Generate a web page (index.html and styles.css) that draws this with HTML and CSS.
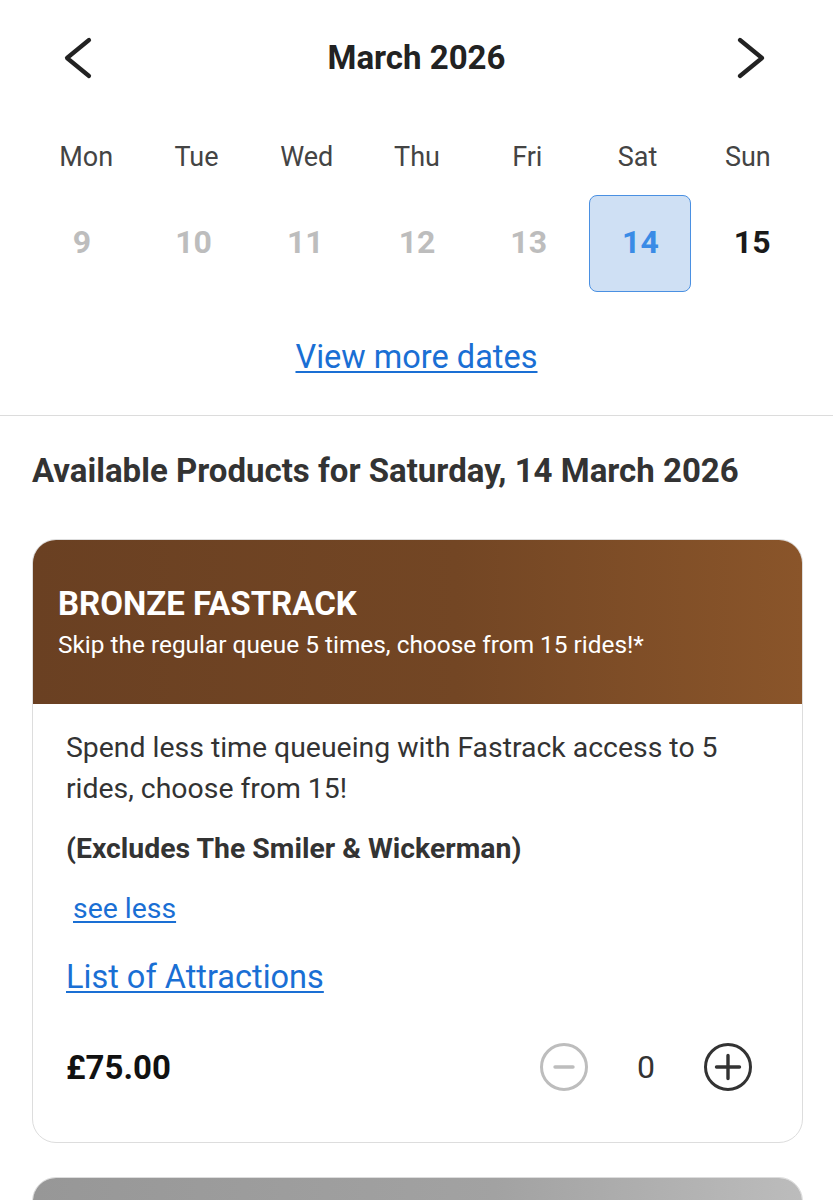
FILE: index.html
```html
<!DOCTYPE html>
<html lang="en">
<head>
<meta charset="utf-8">
<title>Fastrack</title>
<link rel="stylesheet" href="styles.css">
</head>
<body>
<div class="page">
  <header class="month-bar">
    <button class="nav prev" aria-label="Previous month">
      <svg width="32" height="44" viewBox="0 0 32 44"><path d="M25 4 L3 22 L25 40" fill="none" stroke="#222" stroke-width="4.2" stroke-linecap="round" stroke-linejoin="round"/></svg>
    </button>
    <h1 class="month-title">March 2026</h1>
    <button class="nav next" aria-label="Next month">
      <svg width="32" height="44" viewBox="0 0 32 44"><path d="M3 4 L25 22 L3 40" fill="none" stroke="#222" stroke-width="4.2" stroke-linecap="round" stroke-linejoin="round"/></svg>
    </button>
  </header>

  <div class="calendar">
    <div class="weekdays">
      <span>Mon</span><span>Tue</span><span>Wed</span><span>Thu</span><span>Fri</span><span>Sat</span><span>Sun</span>
    </div>
    <div class="days">
      <span class="day disabled">9</span>
      <span class="day disabled">10</span>
      <span class="day disabled">11</span>
      <span class="day disabled">12</span>
      <span class="day disabled">13</span>
      <span class="day selected">14</span>
      <span class="day">15</span>
    </div>
  </div>

  <div class="more-dates"><a href="#">View more dates</a></div>

  <hr class="divider">

  <h2 class="products-title">Available Products for Saturday, 14 March 2026</h2>

  <section class="card">
    <div class="card-head bronze">
      <h3 class="card-title">BRONZE FASTRACK</h3>
      <p class="card-sub">Skip the regular queue 5 times, choose from 15 rides!*</p>
    </div>
    <div class="card-body">
      <p class="desc">Spend less time queueing with Fastrack access to 5 rides, choose from 15!</p>
      <p class="desc strong">(Excludes The Smiler &amp; Wickerman)</p>
      <p class="desc"><a class="see-less" href="#">see less</a></p>
      <p class="attractions"><a href="#">List of Attractions</a></p>
      <div class="price-row">
        <span class="price">£75.00</span>
        <div class="qty">
          <button class="qty-btn minus" aria-label="Decrease">
            <svg width="50" height="50" viewBox="0 0 50 50"><circle cx="25" cy="25" r="22.5" fill="none" stroke="#bdbdbd" stroke-width="3"/><path d="M16 25 H34" stroke="#bdbdbd" stroke-width="3.4" stroke-linecap="round"/></svg>
          </button>
          <span class="qty-val">0</span>
          <button class="qty-btn plus" aria-label="Increase">
            <svg width="50" height="50" viewBox="0 0 50 50"><circle cx="25" cy="25" r="22.5" fill="none" stroke="#333" stroke-width="3"/><path d="M13.5 25 H36.5 M25 13.5 V36.5" stroke="#333" stroke-width="3.4" stroke-linecap="round"/></svg>
          </button>
        </div>
      </div>
    </div>
  </section>

  <section class="card">
    <div class="card-head silver"></div>
  </section>
</div>
</body>
</html>
```

FILE: styles.css
```css
* { box-sizing: border-box; }

html, body {
  margin: 0;
  padding: 0;
  background: #fff;
}

body {
  font-family: Roboto, "Liberation Sans", Arial, sans-serif;
  color: #333;
  height: 1200px;
  overflow: hidden;
}

.page {
  padding-top: 36px;
}

.month-bar {
  display: grid;
  grid-template-columns: 1fr auto 1fr;
  align-items: center;
  padding: 0 64px;
  height: 44px;
}

.nav {
  background: none;
  border: 0;
  padding: 0;
  width: 32px;
  height: 44px;
  display: block;
}
.nav svg { display: block; }
.nav.prev { justify-self: start; }
.nav.next { justify-self: end; }

.month-title {
  margin: 0;
  font-size: 33px;
  font-weight: 700;
  color: #222;
  line-height: 44px;
}

.calendar {
  padding: 0 30px 0 31px;
  margin-top: 60px;
}

.weekdays,
.days {
  display: grid;
  grid-template-columns: repeat(7, 1fr);
  justify-items: center;
  align-items: center;
}

.weekdays span {
  font-size: 27px;
  line-height: 34px;
  color: #444;
}

.days {
  margin: 21px -5px 0;
  height: 97px;
}

.day {
  width: 102px;
  height: 97px;
  display: flex;
  align-items: center;
  justify-content: center;
  padding-bottom: 3px;
  font-size: 32px;
  font-weight: 700;
  color: #1a1a1a;
  border-radius: 8px;
}
.day.disabled { color: #bdbdbd; }
.day.selected {
  background: #cfe0f4;
  border: 1.5px solid #4a90e2;
  color: #3a8be6;
}

.more-dates {
  margin-top: 45px;
  text-align: center;
  line-height: 40px;
  font-size: 32.5px;
}

a {
  color: #1a6fd4;
  text-decoration: underline;
  text-decoration-thickness: 2px;
  text-underline-offset: 3px;
}

.divider {
  margin: 38px 0 0;
  border: 0;
  border-top: 1.5px solid #dcdcdc;
}

.products-title {
  margin: 35px 0 0 32px;
  font-size: 33px;
  line-height: 40px;
  font-weight: 700;
  color: #333;
}

.card {
  margin: 48px 30px 0 32px;
  border: 1px solid #dddddd;
  border-radius: 24px;
  overflow: hidden;
  background: #fff;
}

.card + .card { margin-top: 34px; }

.card-head {
  padding: 46px 25px 43px;
  color: #fff;
  min-height: 164px;
}
.card-head.bronze {
  background: linear-gradient(90deg, #6a4022 0%, #734624 55%, #8a552a 100%);
}
.card-head.silver {
  background: linear-gradient(90deg, #979797 0%, #a2a2a2 60%, #bcbcbc 100%);
}

.card-title {
  margin: 0;
  font-size: 33px;
  line-height: 36px;
  font-weight: 700;
}

.card-sub {
  margin: 8px 0 0;
  font-size: 24.4px;
  line-height: 30px;
}

.card-body {
  padding: 23px 33px 50px 33px;
}

.desc {
  margin: 0 0 19px;
  font-size: 28.4px;
  line-height: 41px;
  color: #333;
}
.desc.strong { font-weight: 700; }

.see-less { margin-left: 7px; }

.attractions {
  margin: 28px 0 0;
  font-size: 32.5px;
  line-height: 41px;
}

.price-row {
  margin-top: 44px;
  display: flex;
  justify-content: space-between;
  align-items: center;
  height: 50px;
  padding-right: 16px;
}

.price {
  font-size: 33px;
  font-weight: 700;
  color: #111;
}

.qty {
  display: flex;
  align-items: center;
  gap: 48px;
}

.qty-btn {
  background: none;
  border: 0;
  padding: 0;
  width: 50px;
  height: 50px;
  display: block;
}
.qty-btn svg { display: block; }

.qty-val {
  font-size: 32px;
  color: #333;
}
```
